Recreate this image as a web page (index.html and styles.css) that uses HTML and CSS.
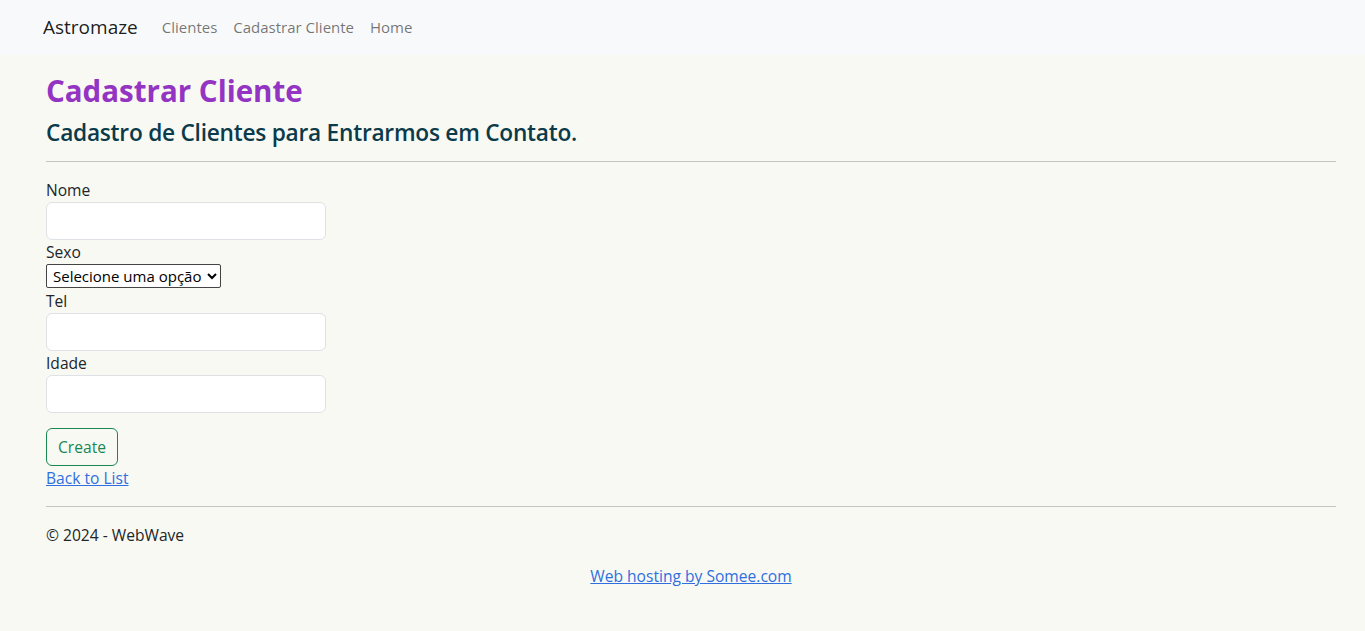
FILE: index.html
```html
<!DOCTYPE html>
<html lang="pt-br">
<head>
<meta charset="utf-8">
<title>Cadastrar Cliente - Astromaze</title>
<link rel="stylesheet" href="styles.css">
</head>
<body>
<nav class="navbar">
  <a class="brand" href="#">Astromaze</a>
  <ul class="nav-links">
    <li><a href="#">Clientes</a></li>
    <li><a href="#">Cadastrar Cliente</a></li>
    <li><a href="#">Home</a></li>
  </ul>
</nav>
<main class="container">
  <h1 class="title">Cadastrar Cliente</h1>
  <h4 class="subtitle">Cadastro de Clientes para Entrarmos em Contato.</h4>
  <hr class="rule">
  <form class="form">
    <label class="label" for="nome">Nome</label>
    <input class="input" id="nome" type="text">
    <label class="label" for="sexo">Sexo</label>
    <div class="select-row"><select class="select" id="sexo"><option>Selecione uma opção</option></select></div>
    <label class="label" for="tel">Tel</label>
    <input class="input" id="tel" type="text">
    <label class="label" for="idade">Idade</label>
    <input class="input" id="idade" type="text">
    <div class="actions"><button class="btn" type="button">Create</button></div>
  </form>
  <div class="back"><a href="#">Back to List</a></div>
  <hr class="rule footer-rule">
  <footer class="footer">© 2024 - WebWave</footer>
</main>
<div class="hosting"><a href="#">Web hosting by Somee.com</a></div>
</body>
</html>
```
FILE: styles.css
```css
* { box-sizing: border-box; }
html, body { margin: 0; padding: 0; }
body {
  background: #f8f9f3;
  font-family: "Open Sans", "Noto Sans", sans-serif;
  font-size: 15.6px;
  line-height: 24px;
  color: #212529;
  min-height: 631px;
}
.navbar {
  height: 55px;
  background: #f8f9fa;
  display: flex;
  align-items: center;
  padding-left: 43px;
  padding-bottom: 2px;
  margin-bottom: 17px;
}
.brand {
  font-size: 19px;
  color: rgba(0,0,0,.9);
  text-decoration: none;
  margin-right: 16px;
}
.nav-links { display: flex; list-style: none; margin: 0; padding: 0; }
.nav-links a {
  display: block;
  padding: 8px 8px;
  font-size: 15px;
  color: rgba(0,0,0,.55);
  text-decoration: none;
}
.container { margin-left: 46px; width: 1290px; }
.title {
  margin: 0 0 8px;
  font-size: 29.5px;
  line-height: 38px;
  font-weight: 700;
  color: #9334c2;
}
.subtitle {
  margin: 0;
  font-size: 22.7px;
  line-height: 29px;
  font-weight: 600;
  letter-spacing: -0.25px;
  color: #0b3b4b;
}
.rule {
  border: 0;
  border-top: 1px solid #c4c4c0;
  margin: 14px 0 16px;
}
.form { display: flex; flex-direction: column; align-items: flex-start; }
.label { display: block; }
.input {
  width: 280px;
  height: 38px;
  border: 1px solid #dee2e6;
  border-radius: 6px;
  background: #fff;
  font: inherit;
  padding: 6px 12px;
}
.select-row { height: 25px; display: flex; align-items: flex-start; }
.select {
  font: inherit;
  font-size: 15px;
  height: 24px;
  width: 175px;
  color: #000;
  border: 1px solid #444;
  border-radius: 2px;
  background: #fff;
  padding: 0 2px;
}
.actions { margin-top: 15px; }
.btn {
  height: 38px;
  width: 72px;
  padding: 6px 0;
  font: inherit;
  color: #198754;
  background: transparent;
  border: 1px solid #198754;
  border-radius: 6px;
}
.back a, .hosting a { color: #2f6fe0; }
.footer-rule { margin: 16px 0; }
.footer { line-height: 24px; }
.hosting { text-align: center; margin-top: 17px; padding-left: 17px; }
```
